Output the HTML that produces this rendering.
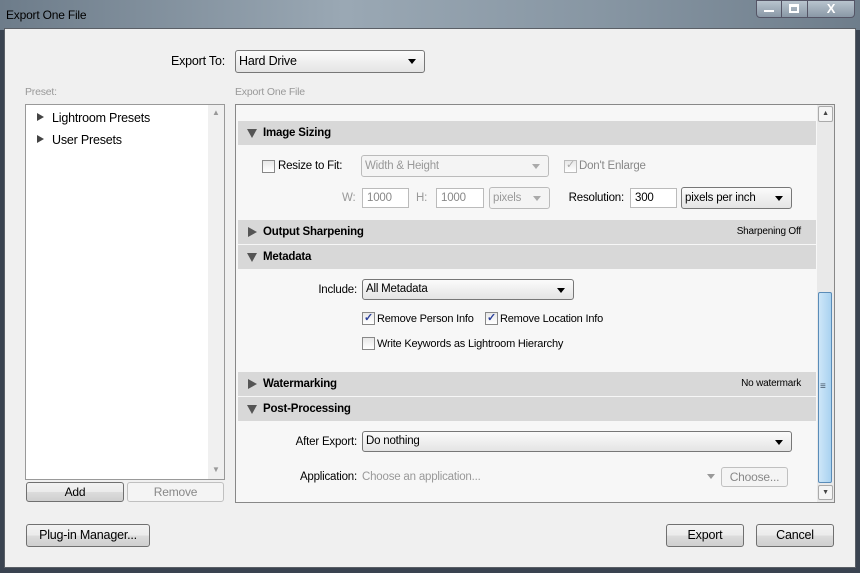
<!DOCTYPE html><html><head><style>
*{margin:0;padding:0;box-sizing:border-box}
body{width:860px;height:573px;overflow:hidden;background:#3a4350;font-family:"Liberation Sans",sans-serif;font-size:11.5px;color:#000;position:relative;letter-spacing:-0.2px}
.a{position:absolute}
.t{position:absolute;white-space:nowrap;line-height:14px}
.rt{position:absolute;white-space:nowrap;line-height:14px;text-align:right}
.btn{position:absolute;border:1px solid #707070;border-radius:3px;background:linear-gradient(#f2f2f2 0%,#ebebeb 50%,#dcdcdc 51%,#cfcfcf 100%);text-align:center;font-size:12.5px}
.dd{position:absolute;border:1px solid #777;border-radius:3px;background:linear-gradient(#fbfbfb,#e4e4e4);padding-left:3px;line-height:20px}
.dd:after{content:"";position:absolute;right:8px;top:8px;border-left:4px solid transparent;border-right:4px solid transparent;border-top:5px solid #000}
.dis{border-color:#bbb;background:#f4f4f4;color:#999}
.dis:after{border-top-color:#aaa}
.in{position:absolute;border:1px solid #bbb;background:#fff;padding-left:4px;line-height:18px}
.hd{position:absolute;left:238px;width:578px;height:24px;background:#d8d8d8;font-weight:bold;font-size:11.5px;line-height:24px;padding-left:25px}
.tri-d{position:absolute;left:9px;top:8px;border-left:5px solid transparent;border-right:5px solid transparent;border-top:9px solid #555}
.tri-r{position:absolute;left:10px;top:7px;border-top:5px solid transparent;border-bottom:5px solid transparent;border-left:9px solid #555}
.hd .r{position:absolute;right:15px;font-weight:normal;font-size:10px}
.cb{position:absolute;width:13px;height:13px;border:1px solid #888;background:linear-gradient(#e8e8e8,#fff)}
.cb.k:after{content:"✓";position:absolute;left:1px;top:-2px;font-size:11px;color:#2a3f9a;font-weight:bold}
</style></head><body>
<div class="a" style="left:0;top:0;width:860px;height:30px;background:linear-gradient(90deg,#6d7c8a,#9aa8b4 40%,#8796a3 70%,#6e7d8b)"></div>
<div class="t" style="left:6px;top:8px;font-size:12px">Export One File</div>
<div class="a" style="left:756px;top:0;width:26px;height:18px;border:1px solid #556;border-radius:0 0 0 4px;background:linear-gradient(#b8c4ce,#8a98a6)"></div>
<div class="a" style="left:764px;top:10px;width:10px;height:2px;background:#fff"></div>
<div class="a" style="left:781px;top:0;width:27px;height:18px;border:1px solid #556;background:linear-gradient(#b8c4ce,#8a98a6)"></div>
<div class="a" style="left:789px;top:4px;width:10px;height:9px;border:2px solid #fff;border-top-width:3px"></div>
<div class="a" style="left:807px;top:0;width:48px;height:18px;border:1px solid #556;border-radius:0 0 4px 0;background:linear-gradient(#b8c4ce,#8a98a6);color:#fff;font-weight:bold;text-align:center;line-height:16px;font-size:13px">X</div>
<div class="a" style="left:4px;top:28px;width:852px;height:540px;background:#f0f0f0;border:1px solid #5a5f66"></div>
<div class="rt" style="right:635px;top:54px;font-size:12.5px">Export To:</div>
<div class="dd" style="left:235px;top:50px;width:190px;height:23px;font-size:12.5px">Hard Drive</div>
<div class="t" style="left:25px;top:85px;color:#999;font-size:10.5px">Preset:</div>
<div class="t" style="left:235px;top:85px;color:#999;font-size:10.5px">Export One File</div>
<div class="a" style="left:25px;top:104px;width:200px;height:376px;background:#fff;border:1px solid #999"></div>
<div class="a" style="left:208px;top:105px;width:16px;height:374px;background:#f0f0f0"></div>
<div class="t" style="left:212px;top:106px;color:#999;font-size:8px">▲</div>
<div class="t" style="left:212px;top:463px;color:#999;font-size:8px">▼</div>
<div class="a" style="left:37px;top:113px;border-top:4.5px solid transparent;border-bottom:4.5px solid transparent;border-left:7px solid #444"></div>
<div class="t" style="left:52px;top:111px;font-size:12.5px">Lightroom Presets</div>
<div class="a" style="left:37px;top:135px;border-top:4.5px solid transparent;border-bottom:4.5px solid transparent;border-left:7px solid #444"></div>
<div class="t" style="left:52px;top:133px;font-size:12.5px">User Presets</div>
<div class="btn" style="left:26px;top:482px;width:98px;height:20px;line-height:18px;font-size:12px">Add</div>
<div class="btn" style="left:127px;top:482px;width:97px;height:20px;line-height:18px;font-size:12px;border-color:#c0c0c0;background:#f4f4f4;color:#888">Remove</div>
<div class="a" style="left:235px;top:104px;width:600px;height:399px;background:#f7f7f7;border:1px solid #888"></div>
<div class="a" style="left:817px;top:105px;width:17px;height:397px;background:#e9e9e9"></div>
<div class="a" style="left:818px;top:106px;width:15px;height:16px;border:1px solid #aaa;border-radius:2px;background:#f4f4f4;font-size:7px;text-align:center;line-height:14px;color:#444">▲</div>
<div class="a" style="left:818px;top:292px;width:14px;height:191px;border:1px solid #5a8cb8;border-radius:2px;background:linear-gradient(90deg,#cde6f8,#a9d2f0)"></div>
<div class="t" style="left:820px;top:380px;font-size:10px;color:#456">≡</div>
<div class="a" style="left:818px;top:485px;width:15px;height:15px;border:1px solid #aaa;border-radius:2px;background:#f4f4f4;font-size:7px;text-align:center;line-height:13px;color:#444">▼</div>

<div class="hd" style="top:121px"><div class="tri-d"></div>Image Sizing</div>
<div class="cb" style="left:262px;top:160px"></div>
<div class="t" style="left:278px;top:159px">Resize to Fit:</div>
<div class="dd dis" style="left:361px;top:155px;width:188px;height:22px">Width &amp; Height</div>
<div class="cb" style="left:564px;top:160px;border-color:#bbb"></div>
<div class="t" style="left:566px;top:158px;color:#aaa;font-size:11px">✓</div>
<div class="t" style="left:579px;top:159px;color:#888">Don't Enlarge</div>
<div class="t" style="left:342px;top:191px;color:#999">W:</div>
<div class="in" style="left:362px;top:188px;width:47px;height:20px;color:#888">1000</div>
<div class="t" style="left:416px;top:191px;color:#999">H:</div>
<div class="in" style="left:436px;top:188px;width:48px;height:20px;color:#888">1000</div>
<div class="dd dis" style="left:489px;top:187px;width:61px;height:22px">pixels</div>
<div class="rt" style="right:236px;top:191px">Resolution:</div>
<div class="in" style="left:630px;top:188px;width:47px;height:20px">300</div>
<div class="dd" style="left:681px;top:187px;width:111px;height:22px">pixels per inch</div>

<div class="hd" style="top:220px"><div class="tri-r"></div>Output Sharpening<span class="r">Sharpening Off</span></div>
<div class="hd" style="top:245px"><div class="tri-d"></div>Metadata</div>
<div class="rt" style="right:503px;top:283px">Include:</div>
<div class="dd" style="left:362px;top:279px;width:212px;height:21px;line-height:19px">All Metadata</div>
<div class="cb k" style="left:362px;top:312px"></div>
<div class="t" style="left:377px;top:312px;font-size:11px">Remove Person Info</div>
<div class="cb k" style="left:485px;top:312px"></div>
<div class="t" style="left:500px;top:312px;font-size:11px">Remove Location Info</div>
<div class="cb" style="left:362px;top:337px"></div>
<div class="t" style="left:377px;top:337px;font-size:11px">Write Keywords as Lightroom Hierarchy</div>
<div class="hd" style="top:372px"><div class="tri-r"></div>Watermarking<span class="r">No watermark</span></div>
<div class="hd" style="top:397px"><div class="tri-d"></div>Post-Processing</div>
<div class="rt" style="right:503px;top:435px">After Export:</div>
<div class="dd" style="left:362px;top:431px;width:430px;height:21px;line-height:19px">Do nothing</div>
<div class="rt" style="right:503px;top:470px">Application:</div>
<div class="t" style="left:362px;top:470px;color:#999">Choose an application...</div>
<div class="a" style="left:707px;top:474px;border-left:4px solid transparent;border-right:4px solid transparent;border-top:5px solid #999"></div>
<div class="btn" style="left:721px;top:467px;width:67px;height:20px;line-height:18px;font-size:12px;border-color:#c0c0c0;background:#f4f4f4;color:#888">Choose...</div>

<div class="btn" style="left:26px;top:524px;width:124px;height:23px;line-height:21px">Plug-in Manager...</div>
<div class="btn" style="left:666px;top:524px;width:78px;height:23px;line-height:21px">Export</div>
<div class="btn" style="left:756px;top:524px;width:78px;height:23px;line-height:21px">Cancel</div>
</body></html>
